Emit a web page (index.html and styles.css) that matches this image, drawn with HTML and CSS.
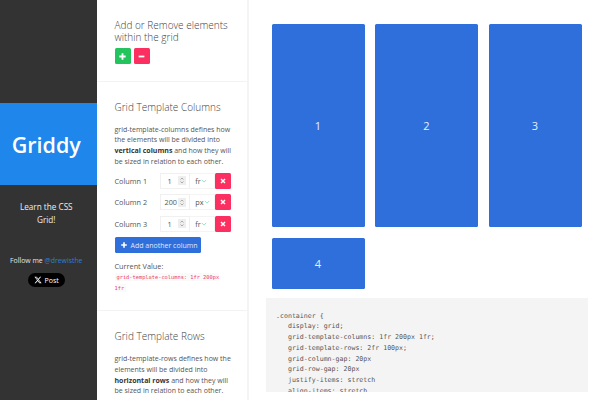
FILE: index.html
```html
<!DOCTYPE html>
<html lang="en">
<head>
<meta charset="utf-8">
<title>Griddy</title>
<link rel="stylesheet" href="styles.css">
</head>
<body>
<div class="app">
  <aside class="sidebar">
    <div class="brand"><h1>Griddy</h1></div>
    <div class="side-body">
      <p class="tagline">Learn the CSS Grid!</p>
      <p class="follow">Follow me <a href="#">@drewisthe</a></p>
      <a class="post" href="#">
        <svg class="x-logo" viewBox="0 0 24 24"><path d="M18.2 2.3h3.3l-7.2 8.2 8.5 11.2h-6.700l-5.200-6.800-6 6.800H1.700l7.700-8.800L1.300 2.300h6.800l4.700 6.200zm-1.200 17.500h1.800L7.100 4.100h-2z"/></svg>
        <span>Post</span>
      </a>
    </div>
  </aside>
  <section class="controls">
    <div class="block block-first">
      <h2>Add or Remove elements within the grid</h2>
      <div class="btn-row">
        <button class="sq green"><svg viewBox="0 0 10 10"><path d="M5 1.500v7M1.500 5h7"/></svg></button>
        <button class="sq red"><svg viewBox="0 0 10 10"><path d="M1.800 5h6.400"/></svg></button>
      </div>
    </div>
    <div class="block">
      <h2>Grid Template Columns</h2>
      <p class="desc">grid-template-columns defines how the elements will be divided into <b>vertical columns</b> and how they will be sized in relation to each other.</p>
      <div class="row"><label>Column 1</label><div class="num"><span>1</span><svg class="spin" viewBox="0 0 8 9"><path d="M2.500 3.500L4 2l1.500 1.500M2.500 5.500L4 7l1.500-1.500"/></svg></div><div class="unit">fr<svg viewBox="0 0 8 5"><path d="M1 1l3 3 3-3"/></svg></div><button class="sq red del"><svg viewBox="0 0 10 10"><path d="M2.500 2.500l5 5M7.500 2.500l-5 5"/></svg></button></div>
      <div class="row"><label>Column 2</label><div class="num wide"><span>200</span><svg class="spin" viewBox="0 0 8 9"><path d="M2.500 3.500L4 2l1.500 1.500M2.500 5.500L4 7l1.500-1.500"/></svg></div><div class="unit">px<svg viewBox="0 0 8 5"><path d="M1 1l3 3 3-3"/></svg></div><button class="sq red del"><svg viewBox="0 0 10 10"><path d="M2.500 2.500l5 5M7.500 2.500l-5 5"/></svg></button></div>
      <div class="row"><label>Column 3</label><div class="num"><span>1</span><svg class="spin" viewBox="0 0 8 9"><path d="M2.500 3.500L4 2l1.500 1.500M2.500 5.500L4 7l1.500-1.500"/></svg></div><div class="unit">fr<svg viewBox="0 0 8 5"><path d="M1 1l3 3 3-3"/></svg></div><button class="sq red del"><svg viewBox="0 0 10 10"><path d="M2.500 2.500l5 5M7.500 2.500l-5 5"/></svg></button></div>
      <button class="add"><svg viewBox="0 0 10 10"><path d="M5 1.500v7M1.500 5h7"/></svg>Add another column</button>
      <p class="current">Current Value:</p>
      <p class="value"><code>grid-template-columns: 1fr 200px 1fr</code></p>
    </div>
    <div class="block">
      <h2>Grid Template Rows</h2>
      <p class="desc">grid-template-rows defines how the elements will be divided into <b>horizontal rows</b> and how they will be sized in relation to each other.</p>
    </div>
  </section>
  <main class="stage">
    <div class="grid">
      <div class="cell">1</div>
      <div class="cell">2</div>
      <div class="cell">3</div>
      <div class="cell">4</div>
    </div>
    <pre class="code">.container {
   display: grid;
   grid-template-columns: 1fr 200px 1fr;
   grid-template-rows: 2fr 100px;
   grid-column-gap: 20px
   grid-row-gap: 20px
   justify-items: stretch
   align-items: stretch
}</pre>
  </main>
</div>
</body>
</html>
```
FILE: styles.css
```css
* { box-sizing: border-box; }
html, body { margin: 0; height: 100%; overflow: hidden; background: #fff; }
body { font-family: "Open Sans", "Noto Sans", sans-serif; color: #555; }
.app { display: flex; width: 600px; height: 400px; overflow: hidden; }

.sidebar { width: 96.500px; flex: none; background: #333; color: #fff; padding-top: 103px; text-align: center; display: flex; flex-direction: column; }
.brand { height: 82px; padding-right: 4px; background: #1f86ec; display: flex; align-items: center; justify-content: center; }
.brand h1 { margin: 0; font-size: 21.500px; font-weight: 600; color: #fff; }
.side-body { padding-right: 4px; display: flex; flex-direction: column; align-items: center; }
.tagline { margin: 15px 14px 0; font-size: 8.200px; line-height: 13px; color: #eee; }
.follow { margin: 29px 0 0; font-size: 6.900px; line-height: 12px; color: #e4e4e4; white-space: nowrap; }
.follow a { color: #2f7fd6; text-decoration: none; }
.post { margin-top: 6px; width: 37px; height: 14px; border-radius: 7px; background: #000; color: #fff; display: flex; align-items: center; justify-content: center; gap: 3px; font-size: 7px; text-decoration: none; }
.x-logo { width: 8px; height: 8px; fill: #fff; }

.controls { width: 152px; flex: none; background: #fff; overflow: hidden; border-right: 2px solid #f4f4f4; }
.block { padding: 18.500px 16px 16px 18px; border-bottom: 1px solid #f3f3f3; }
.block-first { padding-top: 19px; padding-bottom: 17px; }
h2 { margin: 0; font-size: 10px; line-height: 13px; font-weight: 300; color: #444; }
.block-first h2 { line-height: 12px; }
.btn-row { display: flex; gap: 3px; margin-top: 5px; }
.sq { width: 16px; height: 16px; flex: none; padding: 0; border: 0; border-radius: 1.500px; display: flex; align-items: center; justify-content: center; }
.sq svg { width: 9px; height: 9px; fill: none; stroke: #fff; stroke-width: 2; }
.green { background: #23c45e; }
.red { background: #fb2f60; }
.desc { margin: 11px -2px 5px 0; font-size: 7px; line-height: 10.800px; color: #555; }
.desc b { color: #333; }
.row { display: flex; align-items: center; height: 16px; margin-bottom: 5.500px; font-size: 7.300px; }
.row label { width: 45px; flex: none; }
.num { width: 31px; height: 16px; display: flex; align-items: center; justify-content: space-between; border: 1px solid #f0f0f0; padding: 0 3px 0 7px; color: #555; }
.num.wide { padding-left: 4px; }
.spin { width: 8px; height: 9px; background: #eee; fill: none; stroke: #999; stroke-width: 0.800; display: block; }
.unit { width: 24.500px; height: 16px; display: flex; align-items: center; padding-left: 5px; border: 1px solid #f4f4f4; border-left: 0; color: #555; }
.unit svg { width: 6px; height: 4px; fill: none; stroke: #6fdcb0; stroke-width: 1; }
.del svg { width: 8px; height: 8px; stroke-width: 1.800; }
.add { width: 86px; height: 16px; padding: 0 0 0 5px; border: 0; border-radius: 1.500px; background: #2f6fdc; color: #dfe9fb; display: flex; align-items: center; gap: 3px; font-family: inherit; font-size: 7px; white-space: nowrap; }
.add svg { width: 8px; height: 8px; fill: none; stroke: #fff; stroke-width: 2; flex: none; }
.current { margin: 7.800px 0 0; font-size: 7.300px; line-height: 11px; }
.value { margin: 0.500px 2px 0 0; font-size: 5.330px; line-height: 11px; }
code { font-family: "DejaVu Sans Mono", monospace; font-size: 5.330px; color: #ee3b68; background: #fafafa; padding: 1px 2px; }

.stage { flex: 1; min-width: 0; background: #fff; padding: 24px 12px 0 16.500px; }
.grid { display: grid; grid-template-columns: 93px 103px 93px; grid-template-rows: 203px 51.500px; gap: 10.500px; margin-left: 6.500px; }
.cell { background: #2f6fdc; border-radius: 1.500px; color: #e8f0fd; display: flex; align-items: center; justify-content: center; font-size: 11px; }
.code { margin: 9px 0 0 0.500px; height: 94px; overflow: hidden; background: #f4f4f4; padding: 12.500px 10.500px; font-family: "DejaVu Sans Mono", monospace; font-size: 6.600px; line-height: 10.800px; color: #555; }
```
